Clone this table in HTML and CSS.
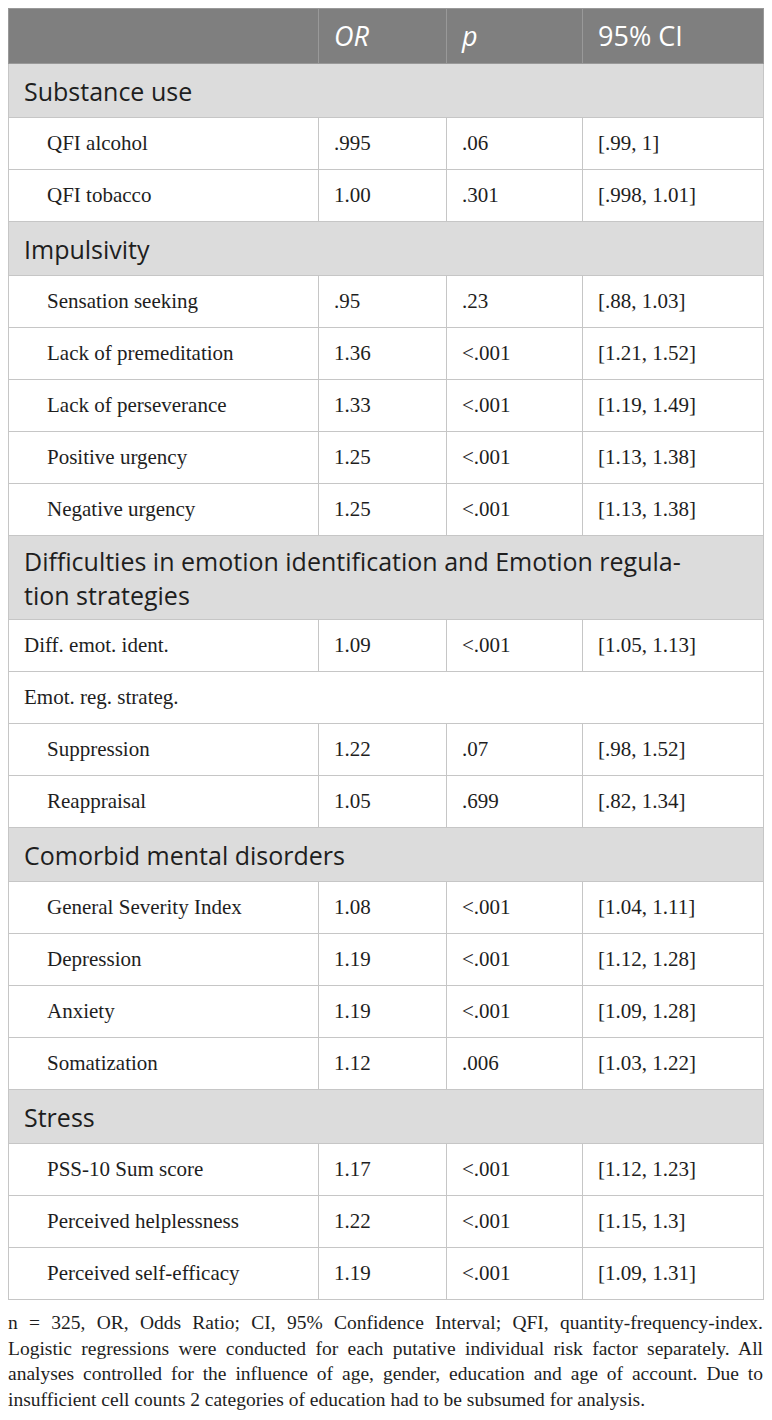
FILE: index.html
```html
<!DOCTYPE html>
<html>
<head>
<meta charset="utf-8">
<link rel="stylesheet" href="styles.css">
</head>
<body>
<table class="tbl">
  <colgroup>
    <col class="c1"><col class="c2"><col class="c3"><col class="c4">
  </colgroup>
  <thead>
    <tr class="head"><th></th><th><i>OR</i></th><th><i>p</i></th><th>95% CI</th></tr>
  </thead>
  <tbody>
    <tr class="sec"><td colspan="4">Substance use</td></tr>
    <tr><td class="ind">QFI alcohol</td><td>.995</td><td>.06</td><td>[.99, 1]</td></tr>
    <tr><td class="ind">QFI tobacco</td><td>1.00</td><td>.301</td><td>[.998, 1.01]</td></tr>
    <tr class="sec"><td colspan="4">Impulsivity</td></tr>
    <tr><td class="ind">Sensation seeking</td><td>.95</td><td>.23</td><td>[.88, 1.03]</td></tr>
    <tr><td class="ind">Lack of premeditation</td><td>1.36</td><td>&lt;.001</td><td>[1.21, 1.52]</td></tr>
    <tr><td class="ind">Lack of perseverance</td><td>1.33</td><td>&lt;.001</td><td>[1.19, 1.49]</td></tr>
    <tr><td class="ind">Positive urgency</td><td>1.25</td><td>&lt;.001</td><td>[1.13, 1.38]</td></tr>
    <tr><td class="ind">Negative urgency</td><td>1.25</td><td>&lt;.001</td><td>[1.13, 1.38]</td></tr>
    <tr class="sec two"><td colspan="4">Difficulties in emotion identification and Emotion regula-<br>tion strategies</td></tr>
    <tr><td>Diff. emot. ident.</td><td>1.09</td><td>&lt;.001</td><td>[1.05, 1.13]</td></tr>
    <tr><td colspan="4">Emot. reg. strateg.</td></tr>
    <tr><td class="ind">Suppression</td><td>1.22</td><td>.07</td><td>[.98, 1.52]</td></tr>
    <tr><td class="ind">Reappraisal</td><td>1.05</td><td>.699</td><td>[.82, 1.34]</td></tr>
    <tr class="sec"><td colspan="4">Comorbid mental disorders</td></tr>
    <tr><td class="ind">General Severity Index</td><td>1.08</td><td>&lt;.001</td><td>[1.04, 1.11]</td></tr>
    <tr><td class="ind">Depression</td><td>1.19</td><td>&lt;.001</td><td>[1.12, 1.28]</td></tr>
    <tr><td class="ind">Anxiety</td><td>1.19</td><td>&lt;.001</td><td>[1.09, 1.28]</td></tr>
    <tr><td class="ind">Somatization</td><td>1.12</td><td>.006</td><td>[1.03, 1.22]</td></tr>
    <tr class="sec"><td colspan="4">Stress</td></tr>
    <tr><td class="ind">PSS-10 Sum score</td><td>1.17</td><td>&lt;.001</td><td>[1.12, 1.23]</td></tr>
    <tr><td class="ind">Perceived helplessness</td><td>1.22</td><td>&lt;.001</td><td>[1.15, 1.3]</td></tr>
    <tr><td class="ind">Perceived self-efficacy</td><td>1.19</td><td>&lt;.001</td><td>[1.09, 1.31]</td></tr>
  </tbody>
</table>
<p class="note"><span class="ln">n = 325, OR, Odds Ratio; CI, 95% Confidence Interval; QFI, quantity-frequency-index.</span> <span class="ln">Logistic regressions were conducted for each putative individual risk factor separately. All</span> <span class="ln">analyses controlled for the influence of age, gender, education and age of account. Due to</span> <span class="ln last">insufficient cell counts 2 categories of education had to be subsumed for analysis.</span></p>
</body>
</html>
```

FILE: styles.css
```css
html, body {
  margin: 0;
  padding: 0;
  background: #ffffff;
}
body {
  padding: 8px 9px 0 8px;
  color: #1e1e1e;
}
.tbl {
  width: 755px;
  border-collapse: collapse;
  table-layout: fixed;
  font-family: "Liberation Serif", "Times New Roman", serif;
  font-size: 21px;
}
.c1 { width: 310px; }
.c2 { width: 128px; }
.c3 { width: 136px; }
.c4 { width: 181px; }
.tbl th, .tbl td {
  border: 1px solid #c6c6c6;
  padding: 0 15px;
  height: 52px;
  text-align: left;
  vertical-align: middle;
  box-sizing: border-box;
  line-height: 1.2;
}
.head th {
  background: #7f7f7f;
  color: #ffffff;
  font-family: "Open Sans", "Noto Sans", sans-serif;
  font-weight: 400;
  font-size: 27px;
  height: 55px;
  border-color: #999999;
}
.sec td {
  background: #dcdcdc;
  font-family: "Open Sans", "Noto Sans", sans-serif;
  font-size: 25px;
  height: 54px;
  color: #1e1e1e;
}
.sec.two td {
  height: 84px;
  line-height: 34px;
}
.tbl td.ind {
  padding-left: 38px;
}
.note {
  margin: 10px 0 0 0;
  width: 755px;
  font-family: "Liberation Serif", "Times New Roman", serif;
  font-size: 19.5px;
  line-height: 25.7px;
  color: #1e1e1e;
}
.ln {
  display: block;
  text-align: justify;
  text-align-last: justify;
}
.ln.last {
  text-align-last: left;
}
```
